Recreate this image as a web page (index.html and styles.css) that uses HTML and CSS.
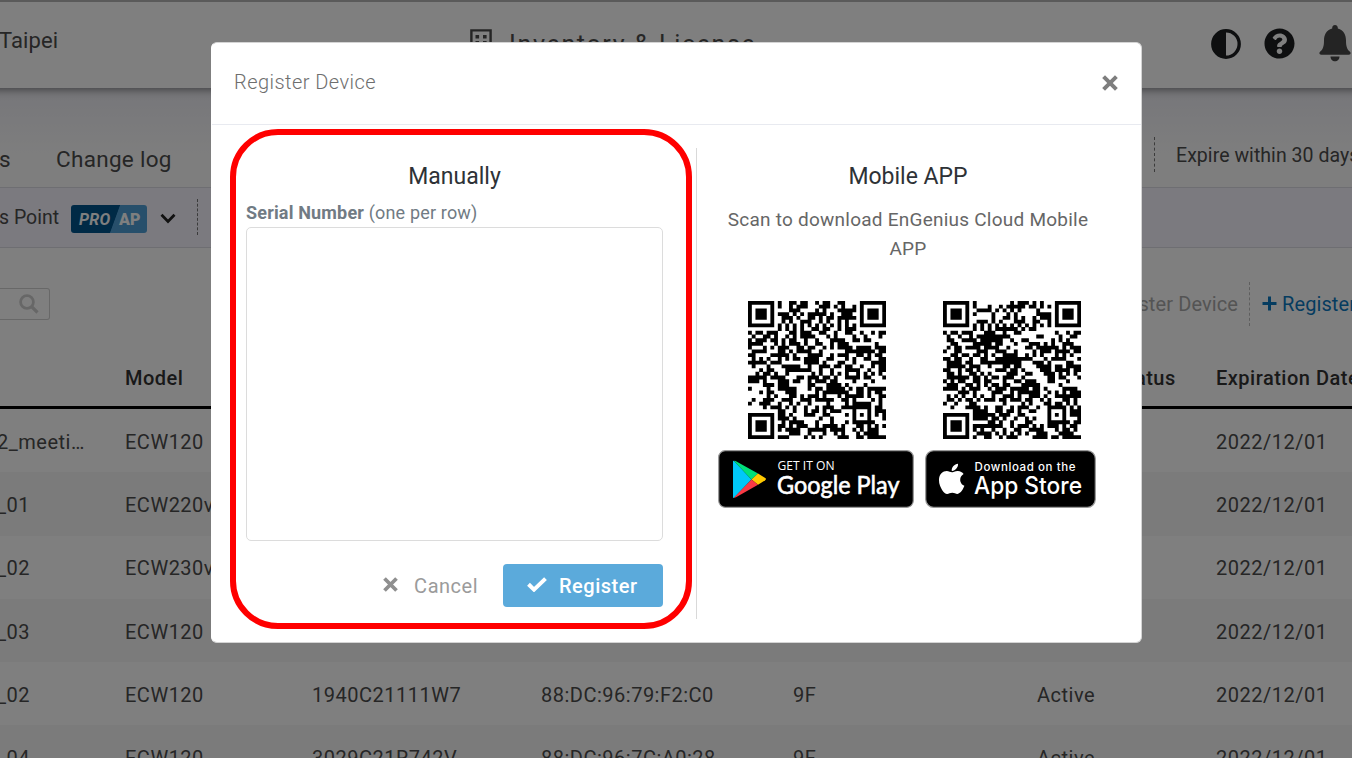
FILE: index.html
```html
<!DOCTYPE html>
<html lang="en">
<head>
<meta charset="utf-8">
<title>Inventory &amp; License</title>
<link rel="stylesheet" href="styles.css">
</head>
<body>
<div class="page">
  <header class="topbar">
    <span class="site">Taipei</span>
    <div class="page-title">
      <svg class="building" viewBox="0 0 22 26"><path fill="none" stroke="#4a4a4a" stroke-width="2.4" d="M1.4 25V1.4h19.2V25"/><path fill="#4a4a4a" d="M5.500 6h3.600v3.600H5.500zm7.500 0h3.600v3.600H13zM5.500 12h3.600v3.600H5.500zm7.500 0h3.600v3.600H13z"/></svg>
      <span>Inventory &amp; License</span>
    </div>
    <div class="tools">
      <svg class="contrast" viewBox="0 0 30 30"><circle cx="15" cy="15" r="13.2" fill="none" stroke="#1c1f21" stroke-width="3.4"/><path fill="#1c1f21" d="M15 1a14 14 0 0 0 0 28z"/></svg>
      <svg class="help" viewBox="0 0 512 512"><path fill="#1c1f21" d="M504 256c0 137-111 248-248 248S8 393 8 256 119 8 256 8s248 111 248 248zM262.700 90c-54.500 0-89.300 23-116.500 63.800-3.500 5.300-2.400 12.400 2.700 16.300l34.700 26.300c5.200 3.900 12.600 3 16.700-2.100 17.900-22.700 30.100-35.800 57.300-35.800 20.400 0 45.700 13.100 45.700 33 0 15-12.400 22.700-32.500 34C247.100 238.500 216 254.900 216 296v4c0 6.600 5.400 12 12 12h56c6.600 0 12-5.400 12-12v-1.300c0-28.500 83.200-29.600 83.200-106.700 0-58-60.200-102-116.500-102zM256 338c-25.400 0-46 20.600-46 46s20.600 46 46 46 46-20.600 46-46-20.600-46-46-46z"/></svg>
      <svg class="bell" viewBox="0 0 32 38"><path fill="#484848" d="M16 1c1.600 0 2.800 1.200 2.800 2.800v.6C24.800 5.700 27 11 27 16.500c0 7 1.600 9.300 4 11.300 1.200 1.100.5 3-1.200 3H2.200c-1.700 0-2.400-1.900-1.200-3 2.400-2 4-4.300 4-11.300C5 11 7.200 5.700 13.200 4.400v-.6C13.200 2.200 14.400 1 16 1zM11.500 32.500h9c0 2.700-2 4.800-4.500 4.800s-4.500-2.100-4.500-4.800z"/></svg>
    </div>
  </header>
  <nav class="tabs">
    <span class="tab-cut">s</span>
    <span class="tab">Change log</span>
    <span class="expire">Expire within 30 days</span>
  </nav>
  <section class="filter">
    <span class="filter-name">s Point</span>
    <span class="pro"><b class="pro-l">PRO</b><b class="pro-r">AP</b></span>
    <svg class="chevron" viewBox="0 0 16 11"><path fill="none" stroke="#222" stroke-width="2.800" d="M1.500 1.800 8 8.400l6.500-6.600"/></svg>
    <span class="dash"></span>
  </section>
  <section class="actions">
    <div class="search"><svg viewBox="0 0 20 20"><circle cx="8" cy="8" r="6.400" fill="none" stroke="#cfcfcf" stroke-width="2.800"/><path stroke="#cfcfcf" stroke-width="3.200" d="m12.500 12.500 6 6"/></svg></div>
    <span class="dereg">De-register Device</span>
    <span class="reg"><svg viewBox="0 0 15 15"><path stroke="#0b78c0" stroke-width="3" d="M7.500.5v14M.5 7.500h14"/></svg>Register Device</span>
  </section>
  <div class="table">
    <div class="row head"><span></span><span>Model</span><span></span><span></span><span></span><span>License Status</span><span>Expiration Date</span></div>
    <div class="row"><span>2_meeti…</span><span>ECW120</span><span></span><span></span><span></span><span></span><span>2022/12/01</span></div>
    <div class="row alt"><span>_01</span><span>ECW220v2</span><span></span><span></span><span></span><span></span><span>2022/12/01</span></div>
    <div class="row"><span>_02</span><span>ECW230v3</span><span></span><span></span><span></span><span></span><span>2022/12/01</span></div>
    <div class="row alt"><span>_03</span><span>ECW120</span><span></span><span></span><span></span><span></span><span>2022/12/01</span></div>
    <div class="row"><span>_02</span><span>ECW120</span><span>1940C21111W7</span><span>88:DC:96:79:F2:C0</span><span>9F</span><span>Active</span><span>2022/12/01</span></div>
    <div class="row alt"><span>_04</span><span>ECW120</span><span>3029C21R742V</span><span>88:DC:96:7C:A0:28</span><span>9F</span><span>Active</span><span>2022/12/01</span></div>
  </div>
</div>

<div class="backdrop">
  <div class="modal">
    <div class="modal-head">
      <span>Register Device</span>
      <svg class="close" viewBox="0 0 16 16"><path stroke="#7e7e7e" stroke-width="4" d="m1.600 1.600 12.800 12.800m0-12.800L1.600 14.400"/></svg>
    </div>
    <div class="modal-body">
      <div class="manual">
        <h2>Manually</h2>
        <label><b>Serial Number</b> (one per row)</label>
        <div class="field"></div>
        <div class="buttons">
          <span class="cancel"><svg viewBox="0 0 16 16"><path stroke="#8f8f8f" stroke-width="4" d="m1.600 1.600 12.800 12.800m0-12.800L1.600 14.400"/></svg>Cancel</span>
          <span class="submit"><svg viewBox="0 0 20 15"><path fill="none" stroke="#fff" stroke-width="4" d="m1.500 7.300 5.500 5.300L18.500 1.600"/></svg>Register</span>
        </div>
      </div>
      <div class="mobile">
        <h2>Mobile APP</h2>
        <p>Scan to download EnGenius Cloud Mobile APP</p>
        <div class="codes">
          <svg class="qr" id="qr-play" viewBox="0 0 37 37"></svg>
          <svg class="qr" id="qr-apple" viewBox="0 0 37 37"></svg>
        </div>
        <div class="badges">
          <svg class="badge-play" viewBox="0 0 196 58">
            <rect x=".7" y=".7" width="194.600" height="56.600" rx="6.500" fill="#000" stroke="#999" stroke-width="1.200"/>
            <path fill="#00c8f8" d="M15 11.500v35.500c0 1 .6 1.300 1 .8L33.500 29.500 16 11q-1-.6-1 .5z"/>
            <path fill="#00e07a" d="M16 11q.8-.5 2 .2L40 23.600l-6.500 6z"/>
            <path fill="#ffc900" d="m40 23.600 7.200 4.300q1.600 1.200 0 2.300L40 34.700l-6.500-5.200z"/>
            <path fill="#f93a45" d="M33.500 29.500 40 34.700 18 47.300q-1.500.8-2 .2z"/>
            <text class="play-small" x="59.500" y="19.500" textLength="57" lengthAdjust="spacingAndGlyphs">GET IT ON</text>
            <text class="play-large" x="59" y="43.500" textLength="122.500" lengthAdjust="spacingAndGlyphs">Google Play</text>
          </svg>
          <svg class="badge-apple" viewBox="0 0 171 58">
            <rect x=".7" y=".7" width="169.600" height="56.600" rx="8" fill="#000" stroke="#999" stroke-width="1.200"/>
            <g transform="translate(13.700 11.500) scale(.0675)"><path fill="#fff" d="M318.700 268.700c-.2-36.700 16.400-64.400 50-84.800-18.800-26.900-47.200-41.700-84.700-44.600-35.500-2.800-74.300 20.700-88.500 20.700-15 0-49.400-19.700-76.400-19.700C63.300 141.200 4 184.800 4 273.500q0 39.300 14.400 81.200c12.800 36.700 59 126.700 107.200 125.200 25.200-.6 43-17.900 75.800-17.900 31.800 0 48.300 17.900 76.400 17.900 48.600-.7 90.400-82.500 102.600-119.300-65.200-30.700-61.700-90-61.700-91.900zm-56.600-164.200c27.300-32.400 24.800-61.900 24-72.500-24.100 1.400-52 16.400-67.900 34.900-17.500 19.800-27.800 44.300-25.600 71.900 26.100 2 49.900-11.400 69.500-34.300z"/></g>
            <text class="apple-small" x="49.500" y="21" textLength="101" lengthAdjust="spacing">Download on the</text>
            <text class="apple-large" x="49" y="44" textLength="108" lengthAdjust="spacingAndGlyphs">App Store</text>
          </svg>
        </div>
      </div>
    </div>
  </div>
  <div class="highlight"></div>
</div>
<script src="qr.js"></script>
</body>
</html>
```

FILE: styles.css
```css
* { box-sizing: border-box; }
body { margin: 0; width: 1352px; height: 758px; overflow: hidden; font-family: Roboto, sans-serif; color: #4c4c4c; background: #fff; }
svg { display: block; flex: none; }
span { white-space: nowrap; flex: none; }
.page { height: 758px; overflow: hidden; }

.topbar { position: relative; height: 88px; display: flex; margin: 0 -10px; padding: 0 10px; background: #fff; border-top: 2px solid #b4b4b4; box-shadow: 0 2px 8px rgba(0,0,0,.45); }
.site { width: 471px; margin-left: -1px; padding-top: 25px; font-size: 22px; line-height: 28px; letter-spacing: .1px; }
.page-title { display: flex; flex: none; width: 741px; padding-top: 27px; font-size: 25px; line-height: 31px; letter-spacing: 1.65px; }
.building { width: 22px; height: 26px; margin-right: 17px; }
.tools { display: flex; padding-top: 22px; }
.contrast { width: 30px; height: 30px; margin-top: 5px; }
.help { width: 31px; height: 31px; margin: 4px 0 0 23px; }
.bell { width: 32px; height: 38px; margin-left: 24px; }

.tabs { display: flex; height: 99px; padding-top: 54px; background: linear-gradient(#ededf4, #fdfdfd 70%); font-size: 22.5px; line-height: 34px; letter-spacing: .3px; }
.tab-cut { width: 57px; margin-left: -1px; }
.tab { width: 1098px; }
.expire { height: 35px; margin-top: -5px; padding-left: 21px; border-left: 1px dashed #777; font-size: 19.5px; line-height: 38px; letter-spacing: .05px; }

.filter { display: flex; height: 61px; border-top: 1px solid #dcdce4; border-bottom: 1px solid #dcdce4; background: #f7f5ff; }
.filter-name { width: 71px; padding-top: 15px; font-size: 19.5px; line-height: 30px; letter-spacing: 0; text-indent: -1px; }
.pro { display: flex; width: 76px; height: 28px; margin-top: 17px; border-radius: 3px; overflow: hidden; background: linear-gradient(110deg, #00548d 0 56.500%, #4e9fd6 57.500%); color: #fff; font: bold 16px/29px Roboto, sans-serif; }
.pro-l { width: 48px; padding-left: 8px; font-style: italic; font-weight: bold; letter-spacing: .3px; }
.chevron { width: 16px; height: 11px; margin: 25px 0 0 13px; }
.dash { height: 36px; margin: 11px 0 0 21px; border-left: 1px dashed #777; }

.actions { display: flex; height: 93px; padding-top: 40px; font-size: 20px; line-height: 32px; letter-spacing: .1px; }
.search { flex: none; width: 50px; height: 32px; padding: 5px 0 0 19px; border: 1px solid #d0d0d0; border-left: 0; border-radius: 0 3px 3px 0; }
.search svg { width: 20px; height: 20px; }
.dereg { width: 1188px; text-align: right; color: #a8a8a8; }
.reg { display: flex; height: 44px; margin: -6px 0 0 11px; padding: 6px 0 0 12px; border-left: 1px dashed #bdbdbd; color: #0b78c0; }
.reg svg { width: 15px; height: 15px; margin: 8px 5px 0 0; }

.row { display: grid; grid-template-columns: 125px 187px 229px 252px 244px 179px 220px; height: 63.3px; padding-top: 2px; align-items: center; font-size: 20px; letter-spacing: .5px; }
.row span:first-child { margin-left: -3px; }
.head { height: 68px; padding-top: 9px; border-bottom: 3px solid #000; color: #333; font-weight: 500; }
.alt { background: #f7f7f7; }

.backdrop { position: absolute; inset: 0; padding: 42px 210px 0 211px; background: rgba(0,0,0,.5); }
.modal { width: 931px; height: 601px; border: 1px solid #d4d4d4; border-left-color: #fff; border-radius: 6px; background: #fff; }
.modal-head { display: flex; justify-content: space-between; height: 82px; padding: 26px 23.5px 0 22px; border-bottom: 1px solid #e8eaf0; color: #6e6e6e; font-size: 20px; line-height: 26px; font-weight: 300; letter-spacing: .45px; }
.close { width: 16px; height: 16px; margin-top: 6px; }
.modal-body { display: flex; padding: 23px 0 0 34px; }
.manual { width: 451px; height: 471px; padding: 13px 33px 0 0; border-right: 1px solid #d9d9d9; }
h2 { margin: 0; text-align: center; font-size: 23px; line-height: 32px; font-weight: 400; color: #2e3236; letter-spacing: 0; }
label { display: block; margin-top: 7px; font-size: 18px; line-height: 26px; letter-spacing: .17px; color: #717b84; }
.field { height: 314px; margin-top: 1px; border: 1px solid #dcdcdc; border-radius: 5px; }
.buttons { display: flex; justify-content: flex-end; margin-top: 23px; font-size: 20px; line-height: 44px; letter-spacing: .5px; }
.cancel { display: flex; color: #9b9b9b; }
.cancel svg { width: 15px; height: 15px; margin: 13px 16px 0 0; }
.submit { display: flex; width: 160px; height: 43px; margin-left: 25px; padding-left: 24px; border-radius: 4px; background: #5baadb; color: #fff; font-weight: 500; }
.submit svg { width: 20px; height: 15px; margin: 13px 12px 0 0; }
.mobile { width: 421px; padding-top: 13px; }
.mobile h2, .mobile p { transform: translateX(.5px); }
.mobile p { width: 380px; margin: 12px auto 0; text-align: center; font-size: 19px; line-height: 29px; color: #666; letter-spacing: .24px; }
.codes { display: flex; gap: 57px; margin: 38px 0 0 51px; }
.qr { width: 138px; height: 138px; }
.badges { display: flex; gap: 11px; margin: 11px 0 0 21px; }
.badge-play { width: 196px; height: 58px; }
.badge-apple { width: 171px; height: 58px; }
text { fill: #fff; font-family: Inter, sans-serif; }
.play-small { font: 500 12px "Open Sans", sans-serif; }
.play-large { font: 400 25px Lato, sans-serif; stroke: #fff; stroke-width: .6px; }
.apple-small { font-size: 11.500px; font-weight: 500; }
.apple-large { font-size: 24px; font-weight: 500; }
.highlight { position: absolute; left: 230px; top: 129px; width: 462px; height: 500px; border: 6px solid #f00; border-radius: 48px; }
```

FILE: qr.js
```js
// QR version 5, error correction level M: two blocks of 43 data + 24 check bytes.
const N = 37, DATA = 43, CHECK = 24;

function mul(a, b) {
  let r = 0;
  for (; b; b >>= 1) {
    if (b & 1) r ^= a;
    a <<= 1;
    if (a & 256) a ^= 0x11d;
  }
  return r;
}

function checkBytes(data) {
  let gen = [1], root = 1;
  for (let i = 0; i < CHECK; i++) {
    const next = [...gen, 0];
    gen.forEach((g, j) => { next[j + 1] ^= mul(g, root); });
    gen = next;
    root = mul(root, 2);
  }
  const rem = [...data, ...Array(CHECK).fill(0)];
  for (let i = 0; i < data.length; i++) {
    const f = rem[i];
    gen.forEach((g, j) => { rem[i + j] ^= mul(g, f); });
  }
  return rem.slice(data.length);
}

function codewords(text) {
  const body = [...text].map(c => c.charCodeAt(0));
  let bits = "0100" + body.length.toString(2).padStart(8, "0");
  body.forEach(b => { bits += b.toString(2).padStart(8, "0"); });
  bits += "0000";
  const bytes = bits.match(/.{8}/g).map(b => parseInt(b, 2));
  for (let i = 0; bytes.length < DATA * 2; i++) bytes.push(i % 2 ? 17 : 236);
  const blocks = [bytes.slice(0, DATA), bytes.slice(DATA)];
  const checks = blocks.map(checkBytes);
  const out = [];
  for (let i = 0; i < DATA; i++) out.push(blocks[0][i], blocks[1][i]);
  for (let i = 0; i < CHECK; i++) out.push(checks[0][i], checks[1][i]);
  return out;
}

function matrix(text, mask) {
  const m = Array.from({ length: N }, () => Array(N).fill(null));
  const rings = (cx, cy, r) => {
    for (let y = cy - r; y <= cy + r; y++) for (let x = cx - r; x <= cx + r; x++) {
      if (x < 0 || y < 0 || x >= N || y >= N) continue;
      const d = Math.max(Math.abs(x - cx), Math.abs(y - cy));
      m[y][x] = r === 2 ? d !== 1 : d !== 2 && d !== 4;
    }
  };
  rings(3, 3, 4); rings(N - 4, 3, 4); rings(3, N - 4, 4); rings(30, 30, 2);
  for (let i = 8; i < N - 8; i++) m[6][i] = m[i][6] = i % 2 === 0;
  let rem = mask;
  for (let i = 0; i < 10; i++) rem = (rem << 1) ^ ((rem >> 9) * 0x537);
  const fmt = ((mask << 10) | rem) ^ 0x5412;
  const bit = i => ((fmt >> i) & 1) === 1;
  for (let i = 0; i < 6; i++) m[i][8] = bit(i);
  m[7][8] = bit(6); m[8][8] = bit(7); m[8][7] = bit(8);
  for (let i = 9; i < 15; i++) m[8][14 - i] = bit(i);
  for (let i = 0; i < 8; i++) m[8][N - 1 - i] = bit(i);
  for (let i = 8; i < 15; i++) m[N - 15 + i][8] = bit(i);
  m[N - 8][8] = true;
  const words = codewords(text);
  let k = 0;
  for (let right = N - 1; right >= 1; right -= 2) {
    if (right === 6) right = 5;
    for (let v = 0; v < N; v++) for (let j = 0; j < 2; j++) {
      const x = right - j, up = ((right + 1) & 2) === 0, y = up ? N - 1 - v : v;
      if (m[y][x] !== null) continue;
      const value = k < words.length * 8 && ((words[k >> 3] >> (7 - (k & 7))) & 1) === 1;
      k++;
      m[y][x] = value !== ((x + y) % 3 === 0);
    }
  }
  return m;
}

function draw(id, text) {
  const path = document.createElementNS("http://www.w3.org/2000/svg", "path");
  let d = "";
  matrix(text, 3).forEach((row, y) => row.forEach((cell, x) => {
    if (cell) d += `M${x} ${y}h1.030v1.030h-1.030z`;
  }));
  path.setAttribute("d", d);
  document.getElementById(id).append(path);
}
draw("qr-play", "https://play.google.com/store/apps/details?id=com.engenius.epmcloud");
draw("qr-apple", "https://apps.apple.com/us/app/engenius-cloud-to-go/id1476516691");
```
